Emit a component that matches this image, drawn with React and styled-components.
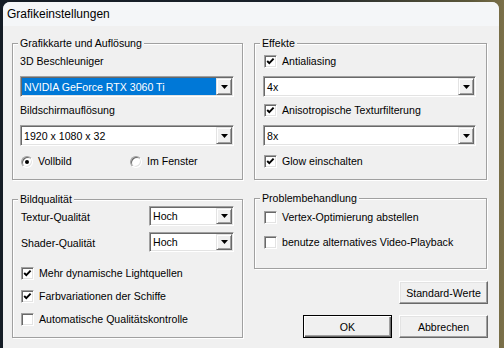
import styled, { createGlobalStyle } from 'styled-components';

const GlobalStyle = createGlobalStyle`
    html, body {
        margin: 0;
        padding: 0;
    }
    body {
        width: 504px;
        height: 348px;
        overflow: hidden;
        background: linear-gradient(90deg, #141c25 0, #1a222b 300px, #5b573a 470px, #7b7049 100%);
        font-family: "Liberation Sans", Arial, sans-serif;
        font-size: 10.6px;
        color: #000;
    }
`;

export default function App() {
    return (
        <>
            <GlobalStyle />
            <Window>
                <TitleBar>Grafikeinstellungen</TitleBar>
                <Body>
                    <Column>
                        <Group $pad="11px 8px 11px 7px">
                            <Legend>Grafikkarte und Auflösung</Legend>
                            <Label>3D Beschleuniger</Label>
                            <Combo $mt={8} value="NVIDIA GeForce RTX 3060 Ti" selected />
                            <Label $mt={7}>Bildschirmauflösung</Label>
                            <Combo $mt={8} value="1920 x 1080 x 32" />
                            <RadioRow $mt={9}>
                                <RadioOption $width={109}>
                                    <Radio $checked />
                                    Vollbild
                                </RadioOption>
                                <RadioOption>
                                    <Radio />
                                    Im Fenster
                                </RadioOption>
                            </RadioRow>
                        </Group>

                        <Group $mt={19} $pad="6px 8px 11px 7px">
                            <Legend>Bildqualität</Legend>
                            <SettingRow>
                                <span>Textur-Qualität</span>
                                <Combo value="Hoch" width={85} height={20} />
                            </SettingRow>
                            <SettingRow $mt={6}>
                                <span>Shader-Qualität</span>
                                <Combo value="Hoch" width={85} height={20} />
                            </SettingRow>
                            <Check $mt={15} checked label="Mehr dynamische Lightquellen" />
                            <Check $mt={10} checked label="Farbvariationen der Schiffe" />
                            <Check $mt={10} label="Automatische Qualitätskontrolle" />
                        </Group>
                    </Column>

                    <Column>
                        <Group $pad="11px 10px 11px 8px">
                            <Legend>Effekte</Legend>
                            <Check checked label="Antialiasing" />
                            <Combo $mt={8} value="4x" />
                            <Check $mt={7} checked label="Anisotropische Texturfilterung" />
                            <Combo $mt={8} value="8x" />
                            <Check $mt={9} checked label="Glow einschalten" />
                        </Group>

                        <Group $mt={18} $pad="12px 10px 19px 8px">
                            <Legend>Problembehandlung</Legend>
                            <Check label="Vertex-Optimierung abstellen" />
                            <Check $mt={12} label="benutze alternatives Video-Playback" />
                        </Group>

                        <ButtonRow $mt={12}>
                            <Button>Standard-Werte</Button>
                        </ButtonRow>
                        <ButtonRow $mt={11}>
                            <Button $default>OK</Button>
                            <Button>Abbrechen</Button>
                        </ButtonRow>
                    </Column>
                </Body>
            </Window>
        </>
    );
}

function Combo({ value, selected, width, height, $mt }) {
    return (
        <ComboBox $mt={$mt} $width={width} $height={height}>
            <ComboField $selected={selected}>{value}</ComboField>
            <ComboButton>
                <svg width="7" height="4" viewBox="0 0 7 4">
                    <path d="M0 0 H7 L3.5 4 Z" fill="#000" />
                </svg>
            </ComboButton>
        </ComboBox>
    );
}

function Check({ checked, label, $mt }) {
    return (
        <CheckRow $mt={$mt}>
            <CheckBox>
                {checked && (
                    <svg width="11" height="11" viewBox="0 0 11 11">
                        <path d="M2.2 5 L4.3 7.2 L8.6 2.6" fill="none" stroke="#000" strokeWidth="1.9" />
                    </svg>
                )}
            </CheckBox>
            {label}
        </CheckRow>
    );
}

// styled components
const Window = styled.div`
    margin: 2px 0 0 3px;
    width: 496px;
    height: 346px;
    background-color: #f0f0f0;
    border-radius: 7px 7px 0 0;
    overflow: hidden;
    display: flex;
    flex-direction: column;
`;

const TitleBar = styled.div`
    height: 24px;
    line-height: 24px;
    padding-left: 4px;
    background-color: #f4f6f8;
    font-size: 12px;
    color: #000;
`;

const Body = styled.div`
    display: grid;
    grid-template-columns: 231px 233px;
    column-gap: 11px;
    padding: 17px 0 0 9px;
`;

const Column = styled.div`
    display: flex;
    flex-direction: column;
`;

const Group = styled.div`
    position: relative;
    display: flex;
    flex-direction: column;
    margin-top: ${p => p.$mt || 0}px;
    padding: ${p => p.$pad};
    border: 1px solid #a0a0a0;
    box-shadow: inset 1px 1px 0 #fff, 1px 1px 0 #fff;
`;

const Legend = styled.span`
    position: absolute;
    top: -7px;
    left: 5px;
    padding: 0 2px 0 2px;
    line-height: 13px;
    background-color: #f0f0f0;
`;

const Label = styled.div`
    line-height: 13px;
    margin-top: ${p => p.$mt || 0}px;
`;

const ComboBox = styled.div`
    display: flex;
    box-sizing: border-box;
    width: ${p => (p.$width ? `${p.$width}px` : '100%')};
    height: ${p => p.$height || 21}px;
    margin-top: ${p => p.$mt || 0}px;
    padding: 1px;
    background-color: #fff;
    border: 1px solid;
    border-color: #a0a0a0 #fff #fff #a0a0a0;
    box-shadow: inset 1px 1px 0 #696969, inset -1px -1px 0 #e3e3e3;
`;

const ComboField = styled.div`
    flex: 1;
    padding-left: 2px;
    display: flex;
    align-items: center;
    white-space: nowrap;
    overflow: hidden;
    background-color: ${p => (p.$selected ? '#0078d7' : '#fff')};
    color: ${p => (p.$selected ? '#fff' : '#000')};
`;

const ComboButton = styled.div`
    box-sizing: border-box;
    width: 16px;
    display: flex;
    align-items: center;
    justify-content: center;
    background-color: #f0f0f0;
    border: 1px solid;
    border-color: #e3e3e3 #696969 #696969 #e3e3e3;
    box-shadow: inset 1px 1px 0 #fff, inset -1px -1px 0 #a0a0a0;
`;

const RadioRow = styled.div`
    display: flex;
    margin-top: ${p => p.$mt || 0}px;
    line-height: 13px;
`;

const RadioOption = styled.div`
    display: flex;
    align-items: center;
    gap: 5px;
    padding-left: 1px;
    width: ${p => (p.$width ? `${p.$width}px` : 'auto')};
    box-sizing: border-box;
`;

const Radio = styled.span`
    box-sizing: border-box;
    width: 12px;
    height: 12px;
    border-radius: 50%;
    background-color: #fff;
    border: 1px solid;
    border-color: #a0a0a0 #fff #fff #a0a0a0;
    box-shadow: inset 1px 1px 0 #696969, inset -1px -1px 0 #e3e3e3;
    display: flex;
    align-items: center;
    justify-content: center;
    &::after {
        content: '';
        width: 4px;
        height: 4px;
        border-radius: 50%;
        background-color: #000;
        display: ${p => (p.$checked ? 'block' : 'none')};
    }
`;

const SettingRow = styled.div`
    display: flex;
    align-items: center;
    justify-content: space-between;
    padding-left: 1px;
    margin-top: ${p => p.$mt || 0}px;
    span {
        line-height: 13px;
        padding-top: 2px;
    }
`;

const CheckRow = styled.div`
    display: flex;
    align-items: center;
    gap: 5px;
    line-height: 13px;
    padding-left: 1px;
    margin-top: ${p => p.$mt || 0}px;
    white-space: nowrap;
`;

const CheckBox = styled.span`
    box-sizing: border-box;
    width: 13px;
    height: 13px;
    flex-shrink: 0;
    background-color: #fff;
    border: 1px solid;
    border-color: #a0a0a0 #fff #fff #a0a0a0;
    box-shadow: inset 1px 1px 0 #696969, inset -1px -1px 0 #e3e3e3;
    display: flex;
    align-items: center;
    justify-content: center;
`;

const ButtonRow = styled.div`
    display: flex;
    justify-content: flex-end;
    gap: 7px;
    margin-top: ${p => p.$mt || 0}px;
    margin-right: -1px;
`;

const Button = styled.button`
    box-sizing: border-box;
    width: 89px;
    height: 23px;
    padding: 0;
    font-family: "Liberation Sans", Arial, sans-serif;
    font-size: 10.6px;
    color: #000;
    background-color: #f0f0f0;
    border: 1px solid;
    border-color: ${p => (p.$default ? '#000' : '#fff #696969 #696969 #fff')};
    box-shadow: ${p => (p.$default
        ? 'inset 1px 1px 0 #fff, inset -1px -1px 0 #696969, inset -2px -2px 0 #a0a0a0'
        : 'inset -1px -1px 0 #a0a0a0, inset 1px 1px 0 #e3e3e3')};
`;
